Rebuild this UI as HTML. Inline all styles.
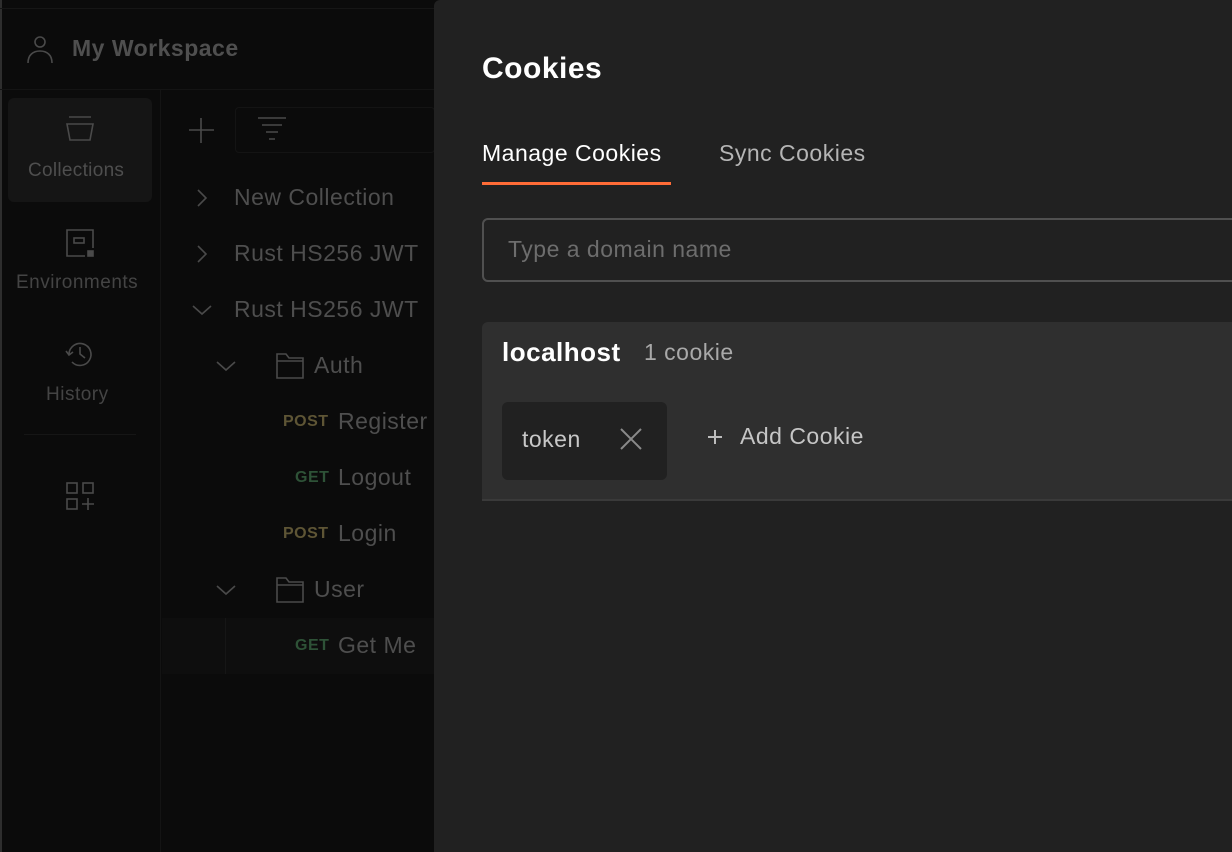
<!DOCTYPE html>
<html><head><meta charset="utf-8"><style>
*{margin:0;padding:0;box-sizing:border-box}
body{width:1232px;height:852px;overflow:hidden;background:#0b0b0b;font-family:"Liberation Sans",sans-serif;position:relative}
.a{position:absolute;letter-spacing:0.5px}
.t{color:#4e4e4e;font-size:23px;position:absolute;white-space:nowrap;letter-spacing:0.5px}
svg{position:absolute;fill:none;stroke:#4a4a4a;stroke-width:1.6}
.m{font-size:16px;font-weight:bold;position:absolute;letter-spacing:0.5px}
</style></head><body>
<div class="a" style="left:0;top:0;width:2px;height:852px;background:#2e2e2e"></div>
<div class="a" style="left:0;top:8px;width:434px;height:1px;background:#161616"></div>
<svg style="left:26px;top:33px" width="28" height="32" viewBox="0 0 28 32"><circle cx="14" cy="9" r="5"/><path d="M2 30c0-8 5-12 12-12s12 4 12 12"/></svg>
<div class="t" style="left:72px;top:35px;font-weight:bold;color:#4f4f4f">My Workspace</div>
<div class="a" style="left:0;top:89px;width:434px;height:1px;background:#141414"></div>
<div class="a" style="left:160px;top:90px;width:1px;height:762px;background:#141414"></div>
<div class="a" style="left:8px;top:98px;width:144px;height:104px;background:#151515;border-radius:6px"></div>
<svg style="left:64px;top:114px" width="32" height="32" viewBox="0 0 32 32"><path d="M5 3h22M3 10h26l-3 16H6z"/></svg>
<div class="t" style="left:28px;top:160px;font-size:19px;letter-spacing:0.3px">Collections</div>
<svg style="left:64px;top:227px" width="32" height="32" viewBox="0 0 32 32"><path d="M29 21V3H3v26h18"/><rect x="10" y="11" width="10" height="5"/><rect x="24" y="24" width="5" height="5" fill="#4a4a4a"/></svg>
<div class="t" style="left:16px;top:272px;font-size:19px;color:#444;letter-spacing:0.5px">Environments</div>
<svg style="left:64px;top:338px" width="32" height="32" viewBox="0 0 32 32"><path d="M5 16a11 11 0 1 1 3 8M2 13l3 4 4-3M16 9v7l5 4"/></svg>
<div class="t" style="left:46px;top:384px;font-size:19px;color:#444">History</div>
<div class="a" style="left:24px;top:434px;width:112px;height:1px;background:#161616"></div>
<svg style="left:64px;top:480px" width="32" height="32" viewBox="0 0 32 32"><rect x="3" y="3" width="10" height="10"/><rect x="19" y="3" width="10" height="10"/><rect x="3" y="19" width="10" height="10"/><path d="M24 18v12M18 24h12"/></svg>
<svg style="left:186px;top:115px" width="30" height="30" viewBox="0 0 30 30"><path d="M15 3v25M3 15h25"/></svg>
<div class="a" style="left:235px;top:107px;width:200px;height:46px;border:1px solid #141414;border-radius:4px"></div>
<svg style="left:256px;top:115px" width="32" height="30" viewBox="0 0 32 30"><path d="M2 3h28M6 10h20M10 17h12M13 24h6"/></svg>
<svg style="left:192px;top:188px" width="20" height="20" viewBox="0 0 20 20"><path d="M6 2l8 8-8 8"/></svg>
<div class="t" style="left:234px;top:184px">New Collection</div>
<svg style="left:192px;top:244px" width="20" height="20" viewBox="0 0 20 20"><path d="M6 2l8 8-8 8"/></svg>
<div class="t" style="left:234px;top:240px">Rust HS256 JWT</div>
<svg style="left:191px;top:300px" width="22" height="20" viewBox="0 0 22 20"><path d="M2 6l9 8 9-8"/></svg>
<div class="t" style="left:234px;top:296px">Rust HS256 JWT</div>
<svg style="left:215px;top:356px" width="22" height="20" viewBox="0 0 22 20"><path d="M2 6l9 8 9-8"/></svg>
<svg style="left:275px;top:351px" width="30" height="30" viewBox="0 0 30 30"><path d="M2 3h9l3 4h14v20H2z M2 10h26"/></svg>
<div class="t" style="left:314px;top:352px">Auth</div>
<div class="m" style="left:283px;top:413px;color:#5e5535">POST</div><div class="t" style="left:338px;top:408px">Register</div>
<div class="m" style="left:295px;top:469px;color:#2e5237">GET</div><div class="t" style="left:338px;top:464px">Logout</div>
<div class="m" style="left:283px;top:525px;color:#5e5535">POST</div><div class="t" style="left:338px;top:520px">Login</div>
<svg style="left:215px;top:580px" width="22" height="20" viewBox="0 0 22 20"><path d="M2 6l9 8 9-8"/></svg>
<svg style="left:275px;top:575px" width="30" height="30" viewBox="0 0 30 30"><path d="M2 3h9l3 4h14v20H2z M2 10h26"/></svg>
<div class="t" style="left:314px;top:576px">User</div>
<div class="a" style="left:162px;top:618px;width:272px;height:56px;background:#0e0e0e"></div>
<div class="a" style="left:225px;top:618px;width:1px;height:56px;background:#161616"></div>
<div class="m" style="left:295px;top:637px;color:#2e5237">GET</div><div class="t" style="left:338px;top:632px">Get Me</div>

<div class="a" style="left:434px;top:0;width:798px;height:852px;background:#212121;border-radius:6px 0 0 0"></div>
<div class="a" style="left:482px;top:52px;font-size:30px;font-weight:bold;color:#fff">Cookies</div>
<div class="a" style="left:482px;top:140px;font-size:23px;color:#fff">Manage Cookies</div>
<div class="a" style="left:482px;top:182px;width:189px;height:3px;background:#ff6c37"></div>
<div class="a" style="left:719px;top:140px;font-size:23px;color:#b5b5b5">Sync Cookies</div>
<div class="a" style="left:482px;top:218px;width:760px;height:64px;border:2px solid #505050;border-radius:6px"></div>
<div class="a" style="left:508px;top:236px;font-size:23px;color:#6d6d6d">Type a domain name</div>
<div class="a" style="left:482px;top:322px;width:760px;height:179px;background:#2f2f2f;border-radius:6px 0 0 0;border-bottom:2px solid #3a3a3a"></div>
<div class="a" style="left:502px;top:337px;font-size:26px;font-weight:bold;color:#fff">localhost</div>
<div class="a" style="left:644px;top:339px;font-size:23px;color:#a9a9a9">1 cookie</div>
<div class="a" style="left:502px;top:402px;width:165px;height:78px;background:#212121;border-radius:6px"></div>
<div class="a" style="left:522px;top:426px;font-size:23px;color:#c8c8c8">token</div>
<svg style="left:619px;top:427px;stroke:#8a8a8a;stroke-width:2" width="24" height="24" viewBox="0 0 24 24"><path d="M2 2l20 20M22 2L2 22"/></svg>
<svg style="left:706px;top:428px;stroke:#bdbdbd;stroke-width:2" width="18" height="18" viewBox="0 0 18 18"><path d="M9 2v14M2 9h14"/></svg>
<div class="a" style="left:740px;top:423px;font-size:23px;color:#c5c5c5">Add Cookie</div>
</body></html>
